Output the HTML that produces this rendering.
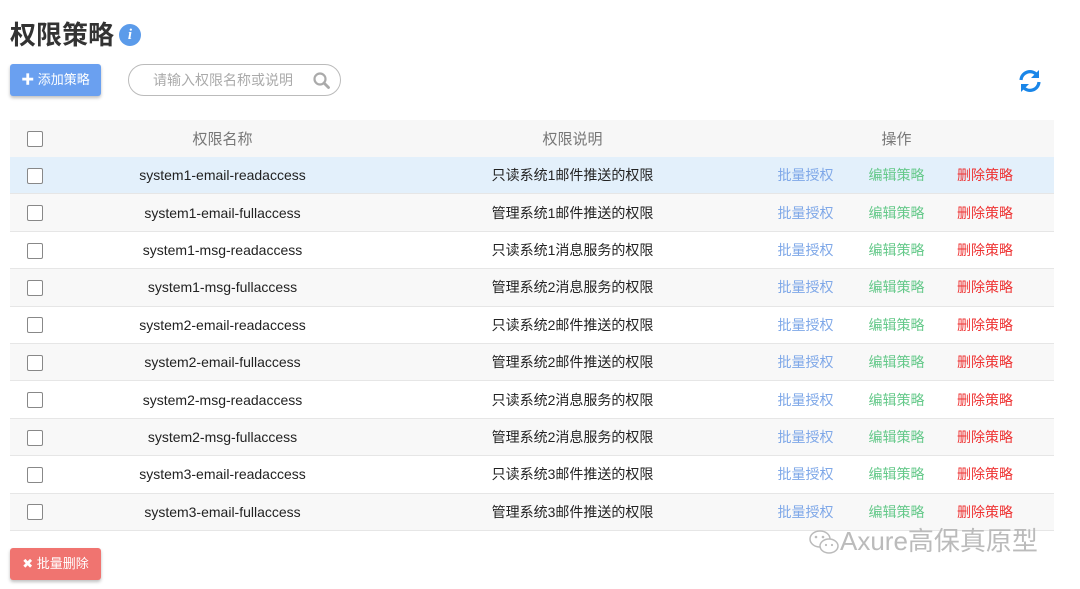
<!DOCTYPE html>
<html><head><meta charset="utf-8"><style>
body{margin:0;width:1080px;height:589px;background:#fff;font-family:"Liberation Sans","Noto Sans CJK SC",sans-serif;position:relative;overflow:hidden}
.abs{position:absolute}
h1{position:absolute;left:10px;top:16px;margin:0;font-size:26px;font-weight:bold;color:#333;font-family:"Noto Sans CJK SC",sans-serif;line-height:36px}
.info{left:119px;top:24px;width:22px;height:22px;border-radius:50%;background:#5b9bea;color:#fff;font:italic bold 15px "Liberation Serif",serif;text-align:center;line-height:22px}
.btn{width:91px;height:32px;border-radius:3px;color:#fff;font-size:13px;text-align:center;line-height:32px;box-shadow:0 2px 3px rgba(0,0,0,.25)}
.search{left:128px;top:64px;width:211px;height:30px;border:1px solid #bbb;border-radius:16px;color:#aaa;font-size:14px;line-height:30px}
table{position:absolute;left:10px;top:120px;width:1044px;border-collapse:collapse;font-size:14px;table-layout:fixed}
td{height:36.4px;padding:0;text-align:center;border-bottom:1px solid #e6e6e6;color:#222}
tr.h td{color:#777;font-size:15px;background:#f7f7f7;border-bottom:none;height:37px}
tr.sel td{background:#e3f0fb}
tr.g td{background:#f8f8f8}
.cb{display:inline-block;width:14px;height:14px;border:1px solid #888;border-radius:2px;vertical-align:middle;background:#fff}
.b{color:#7fa8e8}.gr{color:#65c98a}.r{color:#ee3333;text-align:left!important;padding-left:15px}
</style></head><body>
<h1>权限策略</h1>
<div class="abs info">i</div>
<div class="abs btn" style="left:10px;top:64px;background:#6aa0f0">✚ 添加策略</div>
<div class="abs search"><span style="margin-left:24px">请输入权限名称或说明</span>
<svg class="abs" style="left:184px;top:7px" width="17" height="17" viewBox="0 0 17 17"><circle cx="7" cy="7" r="5.5" fill="none" stroke="#aaa" stroke-width="2.2"/><path d="M11 11l4.5 4.5" stroke="#aaa" stroke-width="2.8" stroke-linecap="round"/></svg></div>
<svg class="abs" style="left:1017px;top:68px" width="26" height="26" viewBox="0 0 26 26"><path d="M4 12A9 9 0 0 1 20 7" fill="none" stroke="#1a86e8" stroke-width="3.2"/><path d="M22 2v8h-8z" fill="#1a86e8"/><path d="M22 14A9 9 0 0 1 6 19" fill="none" stroke="#1a86e8" stroke-width="3.2"/><path d="M4 24v-8h8z" fill="#1a86e8"/></svg>
<table>
<colgroup><col style="width:50px"><col style="width:325px"><col style="width:375px"><col style="width:91px"><col style="width:91px"><col style="width:112px"></colgroup>
<tr class="h"><td><span class="cb"></span></td><td>权限名称</td><td>权限说明</td><td></td><td>操作</td><td></td></tr>
<tr class="sel"><td><span class="cb"></span></td><td>system1-email-readaccess</td><td>只读系统1邮件推送的权限</td><td class="b">批量授权</td><td class="gr">编辑策略</td><td class="r">删除策略</td></tr>
<tr class="g"><td><span class="cb"></span></td><td>system1-email-fullaccess</td><td>管理系统1邮件推送的权限</td><td class="b">批量授权</td><td class="gr">编辑策略</td><td class="r">删除策略</td></tr>
<tr><td><span class="cb"></span></td><td>system1-msg-readaccess</td><td>只读系统1消息服务的权限</td><td class="b">批量授权</td><td class="gr">编辑策略</td><td class="r">删除策略</td></tr>
<tr class="g"><td><span class="cb"></span></td><td>system1-msg-fullaccess</td><td>管理系统2消息服务的权限</td><td class="b">批量授权</td><td class="gr">编辑策略</td><td class="r">删除策略</td></tr>
<tr><td><span class="cb"></span></td><td>system2-email-readaccess</td><td>只读系统2邮件推送的权限</td><td class="b">批量授权</td><td class="gr">编辑策略</td><td class="r">删除策略</td></tr>
<tr class="g"><td><span class="cb"></span></td><td>system2-email-fullaccess</td><td>管理系统2邮件推送的权限</td><td class="b">批量授权</td><td class="gr">编辑策略</td><td class="r">删除策略</td></tr>
<tr><td><span class="cb"></span></td><td>system2-msg-readaccess</td><td>只读系统2消息服务的权限</td><td class="b">批量授权</td><td class="gr">编辑策略</td><td class="r">删除策略</td></tr>
<tr class="g"><td><span class="cb"></span></td><td>system2-msg-fullaccess</td><td>管理系统2消息服务的权限</td><td class="b">批量授权</td><td class="gr">编辑策略</td><td class="r">删除策略</td></tr>
<tr><td><span class="cb"></span></td><td>system3-email-readaccess</td><td>只读系统3邮件推送的权限</td><td class="b">批量授权</td><td class="gr">编辑策略</td><td class="r">删除策略</td></tr>
<tr class="g"><td><span class="cb"></span></td><td>system3-email-fullaccess</td><td>管理系统3邮件推送的权限</td><td class="b">批量授权</td><td class="gr">编辑策略</td><td class="r">删除策略</td></tr>
</table>
<div class="abs btn" style="left:10px;top:548px;background:#f07470">✖ 批量删除</div>
<svg class="abs" style="left:808px;top:528px" width="32" height="30" viewBox="0 0 32 30"><ellipse cx="12" cy="11" rx="10" ry="8" fill="none" stroke="#bbb" stroke-width="1.5"/><ellipse cx="21" cy="18" rx="9" ry="7" fill="#fff" stroke="#bbb" stroke-width="1.5"/><circle cx="8" cy="9" r="1.3" fill="#bbb"/><circle cx="15" cy="9" r="1.3" fill="#bbb"/><circle cx="18" cy="17" r="1.1" fill="#bbb"/><circle cx="24" cy="17" r="1.1" fill="#bbb"/></svg>
<div class="abs" style="left:840px;top:524px;font-size:26px;color:#bbb;line-height:34px">Axure高保真原型</div>
</body></html>
